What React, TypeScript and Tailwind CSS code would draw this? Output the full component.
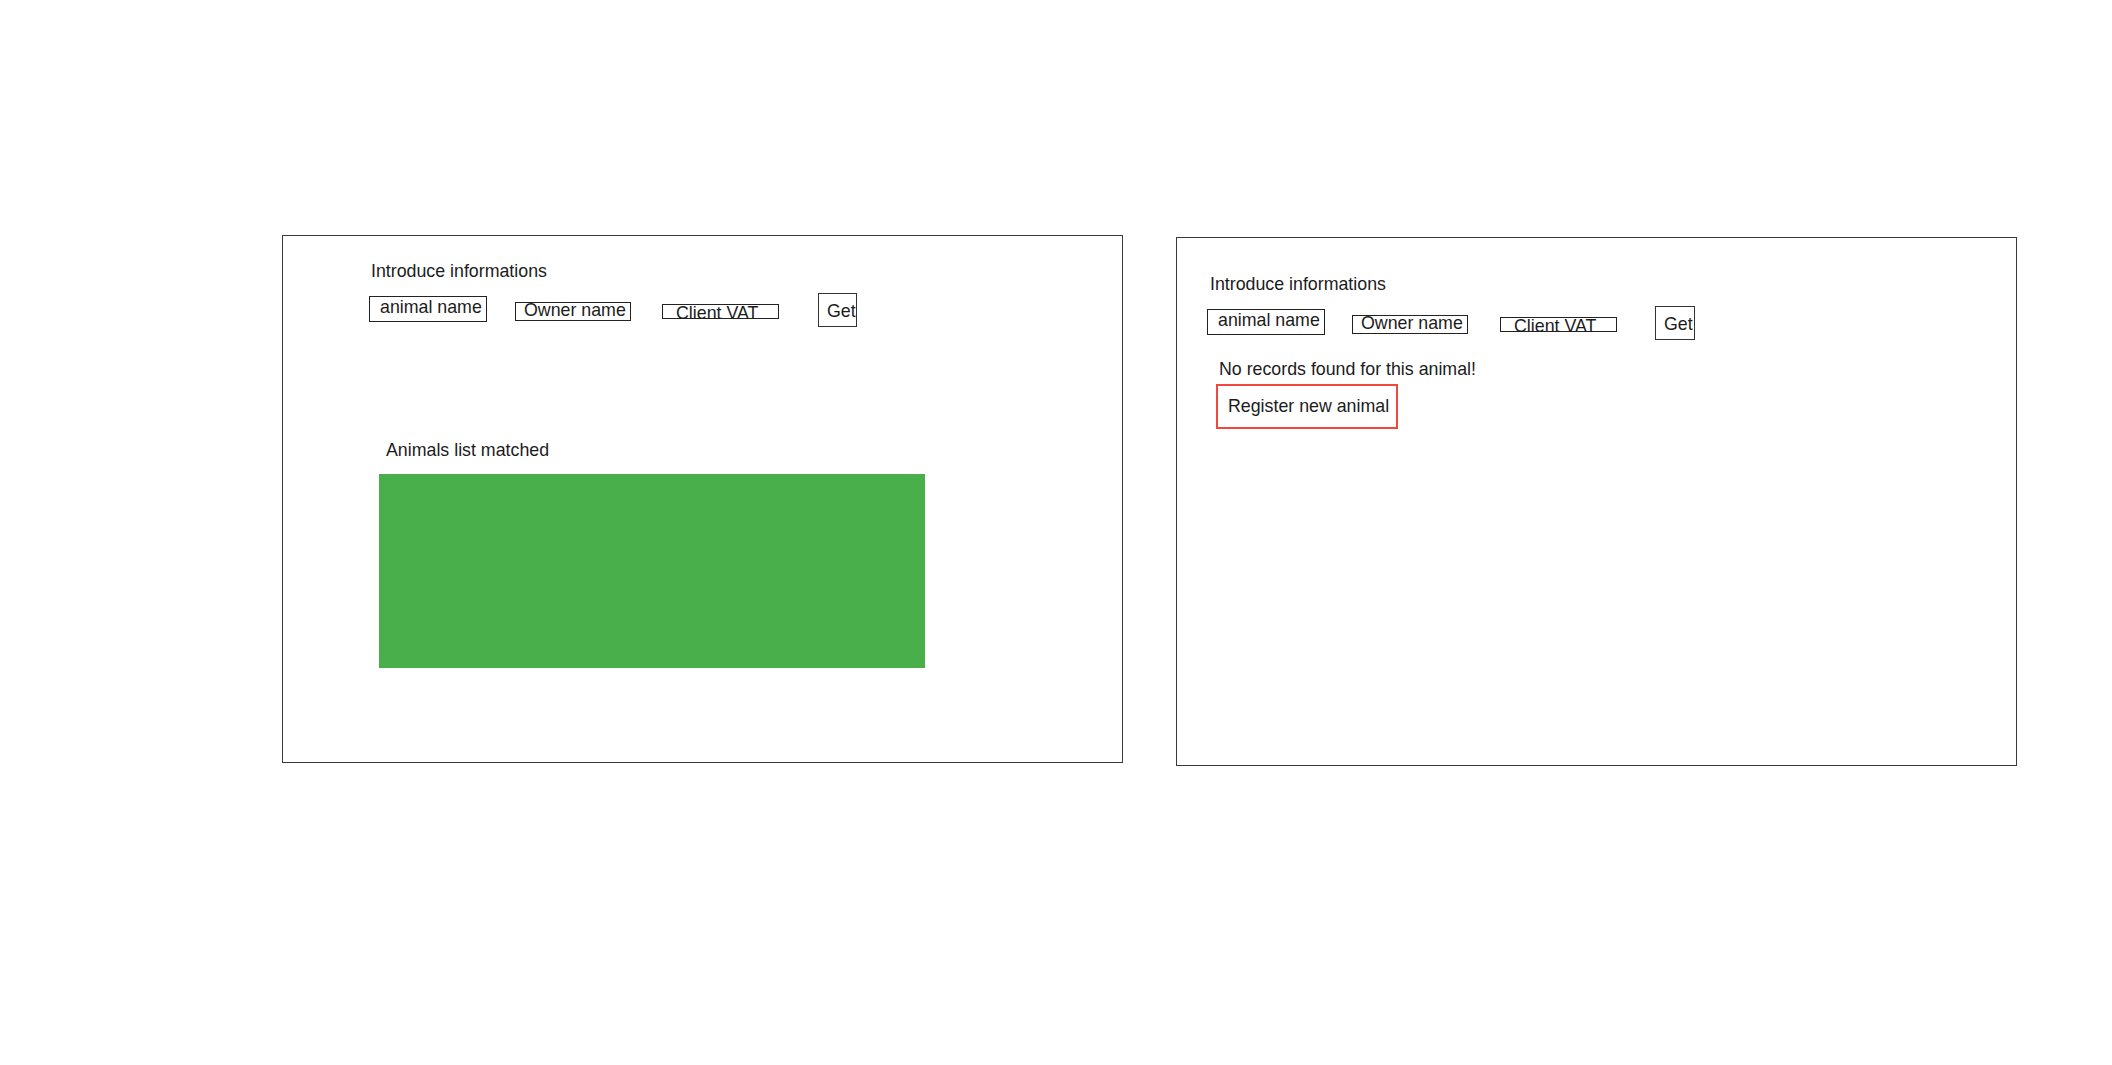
import React from 'react';

const font = { fontFamily: '"Liberation Sans", Arial, sans-serif' };

const SearchRow = ({ right }: { right?: boolean }) => {
  return (
    <div className={`flex items-start mt-[12px] ${right ? 'ml-[30px]' : 'ml-[86px]'}`}>
      {/* animal name */}
      <div className="mt-[3px] w-[118px] h-[26px] border border-[#222] pl-[10px] leading-[20px] whitespace-nowrap">
        animal name
      </div>
      {/* owner name */}
      <div
        className={`mt-[9px] w-[116px] h-[19px] border border-[#222] pl-[8px] leading-[14px] whitespace-nowrap ${
          right ? 'ml-[27px]' : 'ml-[28px]'
        }`}
      >
        Owner name
      </div>
      {/* client vat */}
      <div
        className={`mt-[11px] w-[117px] h-[15px] border border-[#222] pl-[13px] leading-[16px] whitespace-nowrap ${
          right ? 'ml-[32px]' : 'ml-[31px]'
        }`}
      >
        Client VAT
      </div>
      {/* get */}
      <div
        className={`h-[34px] border border-[#333] pl-[8px] pt-[7px] leading-[20px] whitespace-nowrap ${
          right ? 'ml-[38px] w-[40px]' : 'ml-[39px] w-[39px]'
        }`}
      >
        Get
      </div>
    </div>
  );
};

export default function App() {
  return (
    <div
      className="w-full h-[1065px] bg-white text-[17.8px] text-[#1c1c1c] overflow-hidden"
      style={font}
    >
      <div className="flex items-start pt-[235px] pl-[282px]">
        {/* Search with matches */}
        <div className="w-[841px] h-[528px] border border-[#3a3a3a]">
          <div className="ml-[88px] mt-[25px] leading-[20px]">Introduce informations</div>
          <SearchRow />
          <div className="ml-[103px] mt-[113px] leading-[20px]">Animals list matched</div>
          <div className="ml-[96px] mt-[14px] w-[546px] h-[194px] bg-[#49af4b]" />
        </div>

        {/* Search with no records */}
        <div className="ml-[53px] mt-[2px] w-[841px] h-[529px] border border-[#3a3a3a]">
          <div className="ml-[33px] mt-[36px] leading-[20px]">Introduce informations</div>
          <SearchRow right />
          <div className="ml-[42px] mt-[19px] leading-[20px]">No records found for this animal!</div>
          <div className="ml-[39px] mt-[5px] w-[182px] h-[45px] border-2 border-[#f2483b] pl-[10px] pt-[10px] leading-[20px] whitespace-nowrap">
            Register new animal
          </div>
        </div>
      </div>
    </div>
  );
}
